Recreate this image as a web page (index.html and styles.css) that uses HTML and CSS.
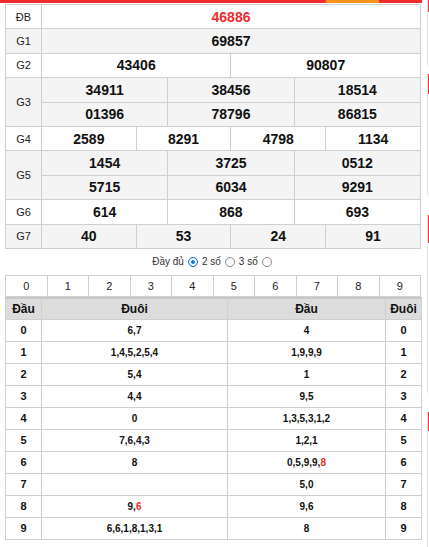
FILE: index.html
```html
<!DOCTYPE html>
<html lang="vi">
<head>
<meta charset="utf-8">
<title>KQXS</title>
<link rel="stylesheet" href="styles.css">
</head>
<body>
<div class="page">
  <div class="main">
    <div class="topbar"></div>
    <table class="kq">
      <colgroup><col class="c-lbl"><col span="12"></colgroup>
      <tr><td class="lbl">ĐB</td><td colspan="12" class="db">46886</td></tr>
      <tr class="alt"><td class="lbl">G1</td><td colspan="12">69857</td></tr>
      <tr><td class="lbl">G2</td><td colspan="6">43406</td><td colspan="6">90807</td></tr>
      <tr class="alt"><td class="lbl" rowspan="2">G3</td><td colspan="4">34911</td><td colspan="4">38456</td><td colspan="4">18514</td></tr>
      <tr class="alt"><td colspan="4">01396</td><td colspan="4">78796</td><td colspan="4">86815</td></tr>
      <tr><td class="lbl">G4</td><td colspan="3">2589</td><td colspan="3">8291</td><td colspan="3">4798</td><td colspan="3">1134</td></tr>
      <tr class="alt"><td class="lbl" rowspan="2">G5</td><td colspan="4">1454</td><td colspan="4">3725</td><td colspan="4">0512</td></tr>
      <tr class="alt"><td colspan="4">5715</td><td colspan="4">6034</td><td colspan="4">9291</td></tr>
      <tr><td class="lbl">G6</td><td colspan="4">614</td><td colspan="4">868</td><td colspan="4">693</td></tr>
      <tr class="alt"><td class="lbl">G7</td><td colspan="3">40</td><td colspan="3">53</td><td colspan="3">24</td><td colspan="3">91</td></tr>
    </table>

    <div class="opts">
      <span>Đầy đủ</span><span class="radio on"></span><span>2 số</span><span class="radio"></span><span>3 số</span><span class="radio"></span>
    </div>

    <table class="digits">
      <tr><td>0</td><td>1</td><td>2</td><td>3</td><td>4</td><td>5</td><td>6</td><td>7</td><td>8</td><td>9</td></tr>
    </table>
    <table class="loto">
      <colgroup><col class="c-k"><col class="c-a"><col class="c-b"><col class="c-k"></colgroup>
      <tr><th>Đầu</th><th>Đuôi</th><th>Đầu</th><th>Đuôi</th></tr>
      <tr><td class="k">0</td><td>6,7</td><td>4</td><td class="k">0</td></tr>
      <tr><td class="k">1</td><td>1,4,5,2,5,4</td><td>1,9,9,9</td><td class="k">1</td></tr>
      <tr><td class="k">2</td><td>5,4</td><td>1</td><td class="k">2</td></tr>
      <tr><td class="k">3</td><td>4,4</td><td>9,5</td><td class="k">3</td></tr>
      <tr><td class="k">4</td><td>0</td><td>1,3,5,3,1,2</td><td class="k">4</td></tr>
      <tr><td class="k">5</td><td>7,6,4,3</td><td>1,2,1</td><td class="k">5</td></tr>
      <tr><td class="k">6</td><td>8</td><td>0,5,9,9,<span class="red">8</span></td><td class="k">6</td></tr>
      <tr><td class="k">7</td><td></td><td>5,0</td><td class="k">7</td></tr>
      <tr><td class="k">8</td><td>9,<span class="red">6</span></td><td>9,6</td><td class="k">8</td></tr>
      <tr><td class="k">9</td><td>6,6,1,8,1,3,1</td><td>8</td><td class="k">9</td></tr>
    </table>
  </div>
  <div class="side">
    <div class="sbox b1"><div class="hd"></div></div>
    <div class="sbox b2"><div class="hd"></div></div>
    <div class="sbox b3"><div class="hd"></div></div>
    <div class="sbox b4"><div class="hd"></div></div>
  </div>
</div>
</body>
</html>
```

FILE: styles.css
```css
html, body {
  margin: 0;
  padding: 0;
  background: #fff;
  overflow: hidden;
}
body {
  font-family: "Liberation Sans", Arial, sans-serif;
  color: #000;
}
.page {
  display: flex;
  width: 429px;
  height: 547px;
  overflow: hidden;
}
.main {
  width: 422px;
  flex: none;
}
.topbar {
  height: 3px;
  background: linear-gradient(to right, #ee2b2e 0 326px, #f7941e 326px 379px, #ee2b2e 379px);
}

/* result table */
.kq {
  margin: 1px 0 0 5px;
  width: 416px;
  border-collapse: collapse;
  table-layout: fixed;
}
.kq col.c-lbl { width: 36px; }
.kq td {
  border: 1px solid #cfcfcf;
  height: 23.4px;
  padding: 0;
  text-align: center;
  font-size: 14px;
  font-weight: bold;
  color: #111;
}
.kq td.lbl {
  font-size: 11px;
  font-weight: normal;
  color: #222;
}
.kq td.db { color: #ee2b2e; }
.kq tr.alt td { background: #f4f4f4; }

/* options line */
.opts {
  display: flex;
  justify-content: center;
  align-items: center;
  gap: 2px;
  height: 26px;
  font-size: 10px;
  color: #333;
  padding-left: 4px;
}
.radio {
  width: 8px;
  height: 8px;
  border: 1px solid #8a8a8a;
  border-radius: 50%;
  margin: 0 2px;
  background: #fff;
}
.radio.on {
  border-color: #1a73e8;
  background: #1a73e8;
  box-shadow: inset 0 0 0 2px #fff;
}

/* digits row */
.digits {
  margin-left: 5px;
  width: 416px;
  border-collapse: collapse;
  table-layout: fixed;
}
.digits td {
  border: 1px solid #cfcfcf;
  height: 20px;
  padding: 0;
  text-align: center;
  font-size: 11px;
  color: #222;
}

/* loto table */
.loto {
  margin-left: 5px;
  width: 416px;
  border-collapse: collapse;
  table-layout: fixed;
}
.loto col.c-k { width: 36px; }
.loto col.c-a { width: 186px; }
.loto col.c-b { width: 158px; }
.loto th {
  background: #dcdcdc;
  border: 1px solid #cfcfcf;
  border-top: 2px solid #c8c8c8;
  height: 20px;
  padding: 0;
  font-size: 12px;
  font-weight: bold;
  color: #111;
}
.loto td {
  border: 1px solid #cfcfcf;
  height: 21px;
  padding: 0;
  text-align: center;
  font-size: 10px;
  font-weight: bold;
  color: #111;
}
.loto td.k { font-size: 11px; }
.red { color: #ee2b2e; }

/* cut-off sidebar */
.side {
  margin-left: 5px;
  width: 2px;
  flex: none;
  display: flex;
  flex-direction: column;
  overflow: hidden;
}
.sbox {
  border-left: 1px solid #e4e4e4;
  flex: none;
}
.sbox .hd { background: #ee2b2e; }
.b1 { height: 66px; }
.b1 .hd { height: 12px; }
.b2 { height: 122px; margin-top: 8px; }
.b2 .hd { height: 20px; }
.b3 { height: 178px; margin-top: 19px; }
.b3 .hd { height: 28px; }
.b4 { height: 135px; margin-top: 19px; }
.b4 .hd { height: 19px; }
```
